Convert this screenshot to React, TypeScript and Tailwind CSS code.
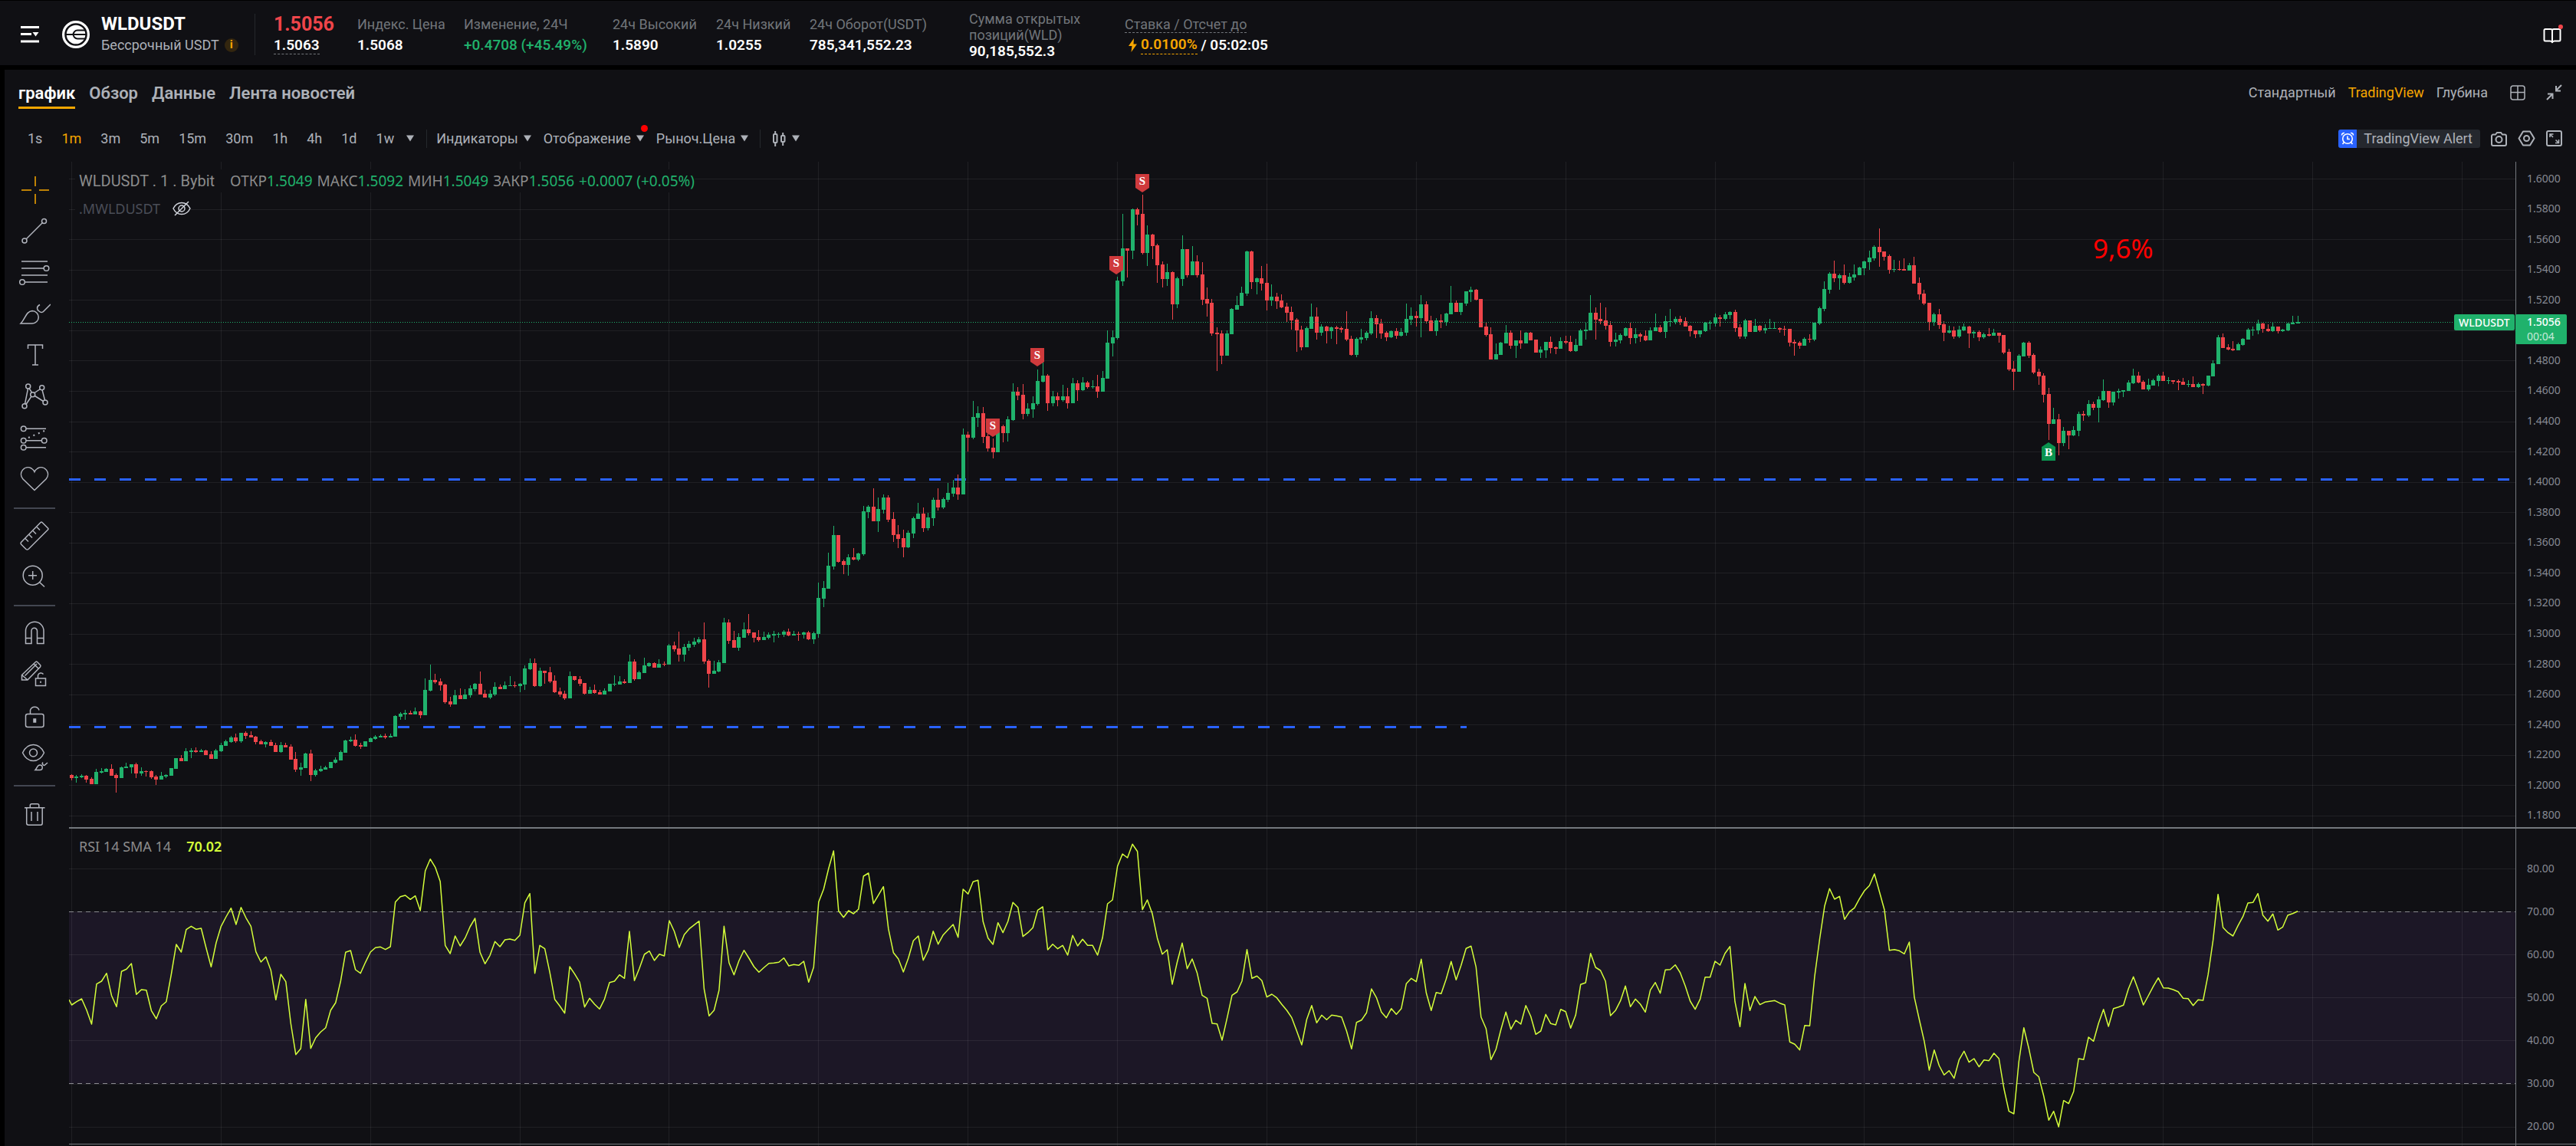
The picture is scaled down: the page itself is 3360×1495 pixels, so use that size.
import React, { useState } from "react";

type Segment = { base: number; tick: number; rows: number[][] };

// every row is [high, open, close, low] in ticks below the base price
const segments: Segment[] = [
  {
    base: 1.32378,
    tick: 0.00016848,
    rows: [
      [690,693,705,714],[693,705,699,723],[691,702,696,705],[693,696,711,723],[703,708,729,729],[669,729,681,729],
      [667,684,678,687],[666,681,669,681],[651,669,696,696],[687,693,705,762],[660,705,663,705],[645,666,660,666],
      [651,663,651,687],[645,651,687,705],[663,687,678,696],[675,678,681,699],[675,678,702,708],[694,699,711,732],
      [681,711,696,711],[690,699,693,705],[666,696,666,696],[627,669,627,669],[615,627,639,639],[588,639,600,639],
      [588,603,597,627],[585,597,603,606],[591,603,597,603],[594,597,615,617],[600,612,630,630],[591,630,597,630],
      [567,600,576,603],[555,579,561,579],[540,564,546,567],[531,546,561,567],[528,561,528,567],[522,528,540,552],
      [522,537,546,546],[540,543,564,573],[555,561,573,573],[561,573,564,585],[555,564,579,579],[567,576,603,603],
      [564,603,576,606],[567,576,585,585],[573,582,633,633],[603,630,672,681],[645,672,663,696],[606,666,609,666],
      [594,609,693,717],[669,693,675,699],[657,678,669,681],[657,672,663,672],[642,666,642,666],[624,645,633,648],
      [597,636,603,636],[555,606,558,606],[543,561,555,564],[534,555,579,582],[567,576,582,591],[561,582,561,582],
      [546,564,549,564],[537,552,543,555],[534,546,540,546],[531,540,546,552],[531,546,540,546],[459,543,462,543],
      [447,465,453,477],[438,456,450,477],[441,450,456,456],[429,456,444,456],[441,444,459,471],[315,459,360,459],
      [261,363,321,366],[297,321,330,336],[315,327,342,363],[336,339,408,414],[387,405,417,426],[360,417,381,417],
      [354,381,396,396],[357,396,378,396],[342,381,354,390],[333,357,336,366],[288,336,378,378],[360,375,390,390],
      [360,390,375,396],[330,378,348,384],[339,348,357,357],[327,357,342,357],[306,345,342,345],[327,342,345,351],
      [333,345,336,369],[264,339,276,360],[237,279,255,282],[237,255,345,348],[273,345,285,348],[285,285,294,336],
      [270,291,327,333],[303,324,369,372],[351,366,378,387],[363,375,393,399],[288,393,306,393],[306,306,321,324],
      [306,318,336,345],[333,333,375,378],[348,375,360,375],[339,360,372,375],[360,369,378,378],[354,378,363,378],
      [336,366,336,366],[303,339,336,345],[306,339,327,339],[318,327,333,336],[222,333,249,333],[240,249,318,324],
      [285,318,291,318],[234,294,264,294],[252,267,255,270],[252,255,273,273],[240,273,258,273],[249,258,261,267],
      [180,261,186,261],[171,186,201,210],[132,198,222,249],[180,222,192,249],[168,195,180,207],[156,183,171,192],
      [153,174,162,180],[96,162,249,258],[240,246,297,351],[246,297,285,297],[243,288,252,291],[78,255,96,255],
      [84,96,168,180],[129,165,195,195],[138,195,153,207],[96,156,123,156],[63,123,138,147],[135,135,156,174],
      [126,153,165,171],[132,165,153,165],[135,156,144,162],[129,147,141,174],[135,144,141,156],[126,144,132,153],
      [120,132,147,150],[129,147,141,147],[132,141,144,168],[132,144,135,159],[129,135,162,165],[132,162,138,180],
    ],
  },
  {
    base: 1.61188,
    tick: 0.00020631,
    rows: [
      [1347,1512,1396,1524],[1343,1399,1365,1426],[1252,1367,1294,1367],[1166,1296,1196,1306],[1196,1196,1281,1284],
      [1274,1279,1291,1321],[1257,1291,1267,1325],[1237,1267,1274,1276],[1252,1274,1254,1279],[1102,1257,1120,1262],
      [1100,1122,1105,1142],[1046,1105,1151,1151],[1076,1151,1112,1186],[1066,1115,1076,1127],[1068,1076,1147,1154],
      [1122,1144,1196,1218],[1164,1193,1208,1237],[1178,1205,1235,1267],[1181,1235,1188,1237],[1137,1191,1142,1205],
      [1093,1144,1127,1144],[1107,1127,1174,1186],[1125,1174,1139,1181],[1076,1142,1083,1166],[1046,1083,1107,1117],
      [1076,1107,1080,1112],[1029,1083,1061,1090],[1019,1063,1044,1073],[1002,1044,1066,1083],[855,1066,875,1066],
      [865,875,884,929],[767,884,818,889],[784,821,806,850],[786,806,882,902],[865,880,919,929],[887,916,931,951],
      [860,931,865,931],[843,848,870,899],[816,870,826,897],[710,828,737,831],[723,737,750,764],[713,747,808,826],
      [774,808,791,816],[752,794,774,821],[666,777,703,782],[645,706,686,708],[681,686,774,799],[735,774,752,784],
      [740,752,764,784],[715,764,752,769],[725,752,774,791],[693,774,710,774],[701,710,733,767],[691,733,708,735],
      [703,708,723,728],[701,723,720,728],[684,720,737,757],[671,737,693,737],[541,696,581,696],[541,583,563,625],
      [370,566,382,571],[169,385,279,399],[279,279,287,372],[152,287,154,314],[149,154,171,206],[108,169,294,299],
      [206,294,235,336],[233,235,272,314],[265,269,333,390],[321,331,377,404],[328,377,355,399],[353,355,458,507],
      [370,458,375,470],[238,377,282,399],[282,282,365,372],[272,365,321,365],[301,321,365,372],[323,363,443,461],
      [404,441,456,497],[441,453,551,559],[532,549,554,671],[541,551,622,649],[541,622,551,622],[470,554,473,554],
      [431,475,461,475],[402,463,421,463],[287,424,289,431],[287,289,387,409],[372,387,375,426],[336,375,392,414],
      [328,390,446,478],[394,446,434,463],[421,434,448,473],[426,446,468,470],[453,465,485,514],[465,483,510,539],
      [502,507,541,610],[527,539,595,605],[529,595,534,595],[456,537,497,537],[468,497,549,571],[522,549,529,559],
      [527,529,544,583],[529,544,532,568],[527,532,537,586],[529,534,539,549],[480,537,571,576],[559,568,620,622],
      [563,620,568,627],[537,571,563,583],[544,566,549,573],[480,551,502,556],[492,502,522,566],[505,519,551,568],
      [544,549,563,576],[541,563,544,566],[534,544,559,568],[534,559,546,561],[456,549,505,559],[468,507,495,524],
      [480,495,502,529],[429,502,458,563],[448,458,512,519],[495,510,544,544],[502,544,510,559],[490,510,514,534],
      [485,514,488,527],[399,490,453,490],[446,453,483,483],[453,483,453,492],[416,456,416,463],[402,419,412,451],
      [409,412,443,446],[441,441,532,532],[517,529,556,561],[532,554,635,635],[583,635,617,635],[578,620,581,620],
      [524,583,549,583],[541,549,590,600],[573,590,573,630],[541,573,583,600],[546,583,549,583],[546,549,573,573],
    ],
  },
  {
    base: 1.5765,
    tick: 0.00016848,
    rows: [
      [489,489,540,540],[516,540,528,561],[498,531,498,561],[477,498,522,543],[516,519,525,546],[480,525,495,525],
      [474,495,501,507],[474,498,534,537],[486,534,510,537],[447,513,453,513],[423,456,450,489],[315,453,384,453],
      [363,384,411,489],[345,408,417,429],[363,414,435,450],[417,432,498,516],[462,498,489,516],[465,492,471,504],
      [441,474,444,477],[423,444,483,507],[444,483,468,504],[462,468,477,498],[453,474,492,495],[441,492,453,492],
      [387,456,441,456],[432,441,459,462],[396,459,417,483],[369,420,417,438],[399,420,408,429],[396,408,420,432],
      [402,417,438,438],[432,435,456,477],[453,453,468,483],[453,468,453,480],[420,456,423,459],[414,426,423,450],
      [387,426,402,438],[393,402,408,438],[381,408,390,414],[378,393,381,408],[372,381,444,459],[429,441,477,486],
      [408,477,414,486],[414,414,459,459],[408,459,435,459],[432,435,453,459],[429,453,444,465],[408,447,444,447],
      [420,447,444,447],[441,444,450,462],[435,447,450,474],[447,447,501,516],[489,498,504,552],[495,501,513,525],
      [480,513,486,513],[468,486,489,501],[423,489,423,495],[360,426,366,432],[261,369,291,378],[225,294,231,309],
      [180,231,249,264],[231,249,237,294],[195,237,267,273],[228,267,243,270],[195,246,234,258],[204,237,207,237],
      [180,210,183,237],[141,186,168,216],[120,171,126,180],[54,126,147,204],[144,144,165,180],[156,162,216,231],
      [177,216,213,225],[180,213,216,219],[171,213,219,219],[189,219,198,219],[165,198,270,270],[246,267,312,333],
      [294,309,348,354],[345,345,420,453],[384,420,390,435],[369,390,432,447],[417,429,462,495],[435,462,453,465],
      [438,453,477,486],[435,477,450,483],[426,453,438,456],[435,438,465,522],[453,465,459,483],[453,459,480,495],
      [462,480,468,486],[444,468,474,477],[447,474,462,474],[462,462,474,501],[471,471,540,546],[525,537,606,612],
      [573,603,615,687],[546,615,552,615],[498,555,501,555],[495,501,552,561],[543,549,618,624],[603,615,633,666],
      [621,630,705,735],[678,702,819,882],[756,819,801,819],[780,801,894,942],[831,894,846,906],[846,846,864,918],
      [828,864,843,867],[771,846,780,867],[768,780,786,807],[726,786,741,792],[732,741,756,765],[711,756,723,813],
      [645,726,690,729],[690,690,735,756],[693,735,693,747],[681,696,690,720],[687,693,687,714],[648,690,657,690],
      [603,660,630,663],[615,630,657,660],[648,654,684,684],[642,684,666,690],[642,669,648,669],[624,651,630,672],
      [615,630,651,651],[636,651,648,663],[648,648,654,663],[645,651,657,687],[639,654,666,666],[648,666,663,675],
      [633,663,675,675],[657,675,663,678],[660,663,669,702],[630,669,630,672],[570,633,582,633],[471,585,480,585],
      [465,480,522,522],[507,519,528,531],[495,525,531,534],[501,531,507,531],[483,510,486,513],[444,489,450,489],
      [438,453,450,474],[411,453,426,468],[423,426,447,462],[429,447,456,459],[423,456,438,459],[438,438,456,465],
      [447,456,450,459],[423,453,426,456],[396,429,423,429],[396,426,420,426],
    ],
  },
];

// RSI per candle, in thirds of a pixel from the top of the pane
const rsi = [
  723,710,699,743,798,641,630,599,686,730,592,583,561,682,663,665,745,777,727,710,603,486,516,428,415,427,423,500,574,480,
  415,378,344,408,341,382,415,515,555,535,587,703,603,632,795,917,894,701,893,851,829,812,744,714,630,517,510,585,599,556,
  516,499,496,506,495,320,299,294,310,296,354,198,152,184,240,490,522,453,492,461,417,384,517,562,529,475,495,468,465,470,
  450,323,287,599,490,503,595,701,727,755,573,602,634,731,697,720,739,700,635,630,605,619,435,628,580,525,512,549,524,531,
  393,435,498,448,425,410,395,660,766,744,665,415,558,605,550,509,540,573,595,577,560,559,556,539,570,565,568,552,634,575,
  320,270,189,120,355,380,354,366,348,219,207,326,293,260,425,518,543,594,540,472,453,548,509,434,485,449,428,408,458,270,
  289,241,235,396,461,486,401,440,396,322,341,455,440,421,352,339,507,485,503,490,528,451,492,466,490,490,528,460,327,312,
  180,132,147,94,122,350,312,366,461,524,507,642,555,481,581,543,598,685,697,795,797,861,775,685,672,629,506,619,610,628,
  692,681,695,721,744,773,825,879,780,725,793,763,781,763,766,770,825,895,791,782,754,660,694,751,773,737,760,737,640,619,
  632,544,675,745,674,679,622,553,625,568,502,493,575,770,815,937,897,820,751,818,783,798,725,768,838,825,760,796,801,740,
  749,814,763,643,636,521,576,588,630,765,745,707,649,730,700,720,751,665,635,677,586,584,566,597,648,708,740,700,614,614,
  552,567,521,494,710,808,639,745,690,722,712,709,706,716,723,868,877,899,803,805,610,465,335,268,309,298,388,358,343,307,
  276,256,210,280,350,509,506,511,523,477,692,780,865,978,899,960,997,980,1010,938,904,947,933,965,938,941,912,933,1050,1139,
  1149,945,812,893,987,1004,1080,1174,1139,1200,1097,1109,1062,933,937,849,865,795,740,807,737,731,724,660,613,665,723,687,650,617,
  656,657,663,671,697,698,725,703,705,605,470,290,420,440,453,413,377,324,322,287,372,395,367,430,418,372,365,356,
];

const GREEN = "#20b26c";
const RED = "#ef454a";
const STEP = 6.4956;

const xAt = (i: number) => 3.5 + i * STEP;
const priceY = (p: number) => 22.5 + ((1.6 - p) / 0.02) * 39.57;
const rsiY = (v: number) => 922.5 + (80 - v) * 5.61;

const candles = segments.flatMap((s) =>
  s.rows.map((r) => r.map((t) => s.base - t * s.tick))
);

const priceLabels = Array.from({ length: 22 }, (_, i) => 1.6 - i * 0.02);
const rsiLabels = [80, 70, 60, 50, 40, 30, 20];

const stats = [
  { label: "Индекс. Цена", value: "1.5068", width: "w-[115px]" },
  { label: "Изменение, 24Ч", value: "+0.4708 (+45.49%)", width: "w-[170px]", up: true },
  { label: "24ч Высокий", value: "1.5890", width: "w-[111px]" },
  { label: "24ч Низкий", value: "1.0255", width: "w-[98px]" },
  { label: "24ч Оборот(USDT)", value: "785,341,552.23", width: "w-[184px]" },
];

const Caret = () => (
  <svg width="10" height="9" viewBox="0 0 10 9" className="shrink-0">
    <path d="M0 0.5h10L5 8.5z" fill="currentColor" />
  </svg>
);

function Header() {
  return (
    <header className="flex h-[84px] items-center whitespace-nowrap bg-[#101014] pl-[27px] pr-[17px] pt-1 text-[18px] leading-[27px]">
      <button aria-label="Меню" className="shrink-0 text-white">
        <svg width="24" height="24" viewBox="0 0 24 24" fill="none" stroke="currentColor" strokeWidth="3">
          <path d="M0 2.5h24M0 11.5h14M0 21h24" />
          <path d="M15.5 9h8l-4 5.5z" fill="currentColor" stroke="none" />
        </svg>
      </button>
      <svg width="36" height="36" viewBox="0 0 36 36" className="ml-[30px] shrink-0" fill="none">
        <circle cx="18" cy="18" r="16.4" stroke="#fff" strokeWidth="3.2" />
        <circle cx="18" cy="18" r="12.3" fill="#fff" />
        <path d="M31 12.6H20a5.4 5.4 0 0 0 0 10.8h11" stroke="#101014" strokeWidth="2" />
        <path d="M5 18h26" stroke="#101014" strokeWidth="2" />
      </svg>
      <div className="ml-[15px] w-[201px] shrink-0 border-r border-[#25282c]">
        <div className="text-[24px] font-bold text-white">WLDUSDT</div>
        <div className="flex items-center gap-[7px] text-[#adb1b8]">
          Бессрочный USDT
          <span className="flex size-[18px] items-center justify-center rounded-full bg-[#33260f] text-[15px] font-bold text-[#f7a600]">
            i
          </span>
        </div>
      </div>
      <div className="ml-6 w-[85px] shrink-0">
        <div className="text-[25px] font-bold text-[#ef454a]">1.5056</div>
        <div className="text-[19px] font-semibold text-white">
          <span className="border-b border-dashed border-[#71757a]">1.5063</span>
        </div>
      </div>
      <dl className="ml-6 flex items-center gap-6">
        {stats.map((s) => (
          <div key={s.label} className={`${s.width} shrink-0`}>
            <dt className="text-[#71757a]">{s.label}</dt>
            <dd className={s.up ? "text-[19px] font-medium text-[#20b26c]" : "text-[19px] font-semibold text-white"}>
              {s.value}
            </dd>
          </div>
        ))}
        <div className="w-[179px] shrink-0 leading-[21px]">
          <dt className="text-[#71757a]">
            Сумма открытых
            <br />
            позиций(WLD)
          </dt>
          <dd className="text-[19px] font-semibold text-white">90,185,552.3</dd>
        </div>
        <div className="shrink-0">
          <dt className="text-[#71757a]">
            <span className="border-b border-dashed border-[#71757a]">Ставка / Отсчет до</span>
          </dt>
          <dd className="flex items-center pl-[5px] text-[19px] font-semibold text-white">
            <svg width="11" height="18" viewBox="0 0 11 18" className="mr-[5px]">
              <path d="M7 0L0 10h4.5L3.5 18 11 7.5H6.5z" fill="#f7a600" />
            </svg>
            <span className="border-b border-dashed border-[#f7a600] leading-6 text-[#f7a600]">0.0100%</span>
            &nbsp;/ 05:02:05
          </dd>
        </div>
      </dl>
      <button aria-label="Обучение" className="ml-auto text-white">
        <svg width="26" height="28" viewBox="0 0 26 28" fill="none" stroke="currentColor" strokeWidth="2">
          <path d="M12 8.500V25M12 24c-1-1-2-1.500-3-1.500H3A1.500 1.500 0 0 1 1.500 21V8.500A1.500 1.500 0 0 1 3 7h7a2 2 0 0 1 2 2 2 2 0 0 1 2-2h7a1.500 1.500 0 0 1 1.500 1.500V21a1.500 1.500 0 0 1-1.500 1.500h-6c-1 0-2 .5-3 1.500z" />
          <circle cx="23" cy="4" r="3" fill="#ef454a" stroke="none" />
        </svg>
      </button>
    </header>
  );
}

function Tabs() {
  const [tab, setTab] = useState("график");
  return (
    <div className="flex h-[59px] items-center justify-between px-[18px]">
      <nav className="flex gap-[18px] text-[22px] font-semibold">
        {["график", "Обзор", "Данные", "Лента новостей"].map((t) => (
          <button
            key={t}
            onClick={() => setTab(t)}
            className={
              t === tab
                ? "h-[43px] border-b-[3px] border-[#f7a600] pt-1 text-white"
                : "h-[43px] border-b-[3px] border-transparent pt-1 text-[#adb1b8]"
            }
          >
            {t}
          </button>
        ))}
      </nav>
      <div className="flex items-center gap-4 text-[18px] text-[#adb1b8]">
        <button>Стандартный</button>
        <button className="text-[#f7a600]">TradingView</button>
        <button>Глубина</button>
        <button aria-label="Сетка" className="ml-[13px]">
          <svg width="20" height="20" viewBox="0 0 20 20" fill="none" stroke="currentColor" strokeWidth="1.5">
            <rect x="1" y="1" width="18" height="18" rx="3" />
            <path d="M10 1v18M1 9.5h18" />
          </svg>
        </button>
        <button aria-label="Свернуть" className="ml-[11px]">
          <svg width="21" height="21" viewBox="0 0 21 21" fill="none" stroke="currentColor" strokeWidth="2">
            <path d="M20 1l-7 7M13 2v6.5h6M1 20l7-7M8.5 19v-6.500H2" />
          </svg>
        </button>
      </div>
    </div>
  );
}

function Toolbar() {
  const [period, setPeriod] = useState("1m");
  return (
    <div className="flex h-[61px] items-center justify-between whitespace-nowrap pl-[30px] pr-[18px] text-[18px] text-[#adb1b8]">
      <div className="flex items-center">
        <div className="flex items-center gap-[25px]">
          {["1s", "1m", "3m", "5m", "15m", "30m", "1h", "4h", "1d", "1w"].map((p) => (
            <button
              key={p}
              onClick={() => setPeriod(p)}
              className={p === period ? "text-[#f7a600]" : ""}
            >
              {p}
            </button>
          ))}
        </div>
        <button aria-label="Другие интервалы" className="ml-4">
          <Caret />
        </button>
        <span className="ml-4 mr-3 h-6 w-px bg-[#25282c]" />
        <button className="flex items-center gap-[7px]">
          Индикаторы <Caret />
        </button>
        <button className="relative ml-4 flex items-center gap-[7px]">
          Отображение <Caret />
          <span className="absolute -top-1 right-[-5px] size-[9px] rounded-full bg-[#f00]" />
        </button>
        <button className="ml-4 flex items-center gap-[7px]">
          Рыноч.Цена <Caret />
        </button>
        <span className="mx-[15px] h-6 w-px bg-[#25282c]" />
        <button aria-label="Тип графика" className="flex items-center gap-[7px]">
          <svg width="19" height="20" viewBox="0 0 19 20" fill="none" stroke="currentColor" strokeWidth="2">
            <rect x="2" y="4" width="4.5" height="11" rx="1" />
            <rect x="12" y="6" width="4.5" height="8" rx="1" />
            <path d="M4.2 0v4M4.2 15v5M14.2 2v4M14.2 14v5" />
          </svg>
          <Caret />
        </button>
      </div>
      <div className="flex items-center gap-[14px]">
        <button className="flex h-6 items-center overflow-hidden rounded-[3px] bg-[#25282e] pr-2.5">
          <span className="mr-[9px] flex size-6 items-center justify-center bg-[#2962ff] text-white">
            <svg width="18" height="18" viewBox="0 0 18 18" fill="none" stroke="currentColor" strokeWidth="1.6">
              <circle cx="9" cy="9" r="6.3" />
              <path d="M9 5.5V9.500h3M1.500 4.500A3 3 0 0 1 5 1.500M16.500 4.500A3 3 0 0 0 13 1.500M4.500 13.500L2.500 16M13.500 13.500l2 2.500" />
            </svg>
          </span>
          TradingView Alert
        </button>
        <button aria-label="Снимок">
          <svg width="21" height="20" viewBox="0 0 21 20" fill="none" stroke="currentColor" strokeWidth="2">
            <path d="M3 4.5h3L8 2h5l2 2.500h3a2 2 0 0 1 2 2V17a2 2 0 0 1-2 2H3a2 2 0 0 1-2-2V6.500a2 2 0 0 1 2-2z" />
            <circle cx="10.5" cy="11" r="4" />
          </svg>
        </button>
        <button aria-label="Настройки">
          <svg width="23" height="21" viewBox="0 0 23 21" fill="none" stroke="currentColor" strokeWidth="2">
            <path d="M7 1.5h9l5.500 9-5.500 9H7l-5.500-9z" strokeLinejoin="round" />
            <circle cx="11.5" cy="10.5" r="3.5" />
          </svg>
        </button>
        <button aria-label="На весь экран">
          <svg width="21" height="21" viewBox="0 0 21 21" fill="none" stroke="currentColor" strokeWidth="2">
            <rect x="1" y="1" width="19" height="19" rx="2" />
            <path d="M5 9V5h4.500M5 5l4 4M16.500 12v4.500H12M16.500 16.500l-4-4" strokeWidth="1.6" />
          </svg>
        </button>
      </div>
    </div>
  );
}

const tools: { name: string; icon: React.ReactNode }[][] = [
  [
    { name: "Перекрестие", icon: <path d="M22 3v13M22 26v13M4 21h13M27 21h13" stroke="#f7a600" /> },
    {
      name: "Линия тренда",
      icon: (
        <>
          <circle cx="33.5" cy="7.5" r="3" />
          <circle cx="8" cy="33" r="3" />
          <path d="M31.5 9.5L10 31" />
        </>
      ),
    },
    {
      name: "Фибоначчи",
      icon: (
        <>
          <path d="M4 6h34M4 15h29M4 24h34M9 33h29" />
          <circle cx="36.5" cy="15" r="3.3" />
          <circle cx="5" cy="33" r="3.3" />
        </>
      ),
    },
    {
      name: "Кисть",
      icon: (
        <path d="M3 33C9 27 10 17 18 16.5A8.2 8.2 0 0 1 18 33zM28 8.5C23 11 24 15 27 17c3 2.5 5 1.5 7-1l8-8" />
      ),
    },
    { name: "Текст", icon: <path d="M12.5 12V7h19v5M22 7v26M18 33h8" /> },
    {
      name: "Паттерны",
      icon: (
        <>
          <circle cx="12.7" cy="7" r="3" />
          <circle cx="30.7" cy="8.7" r="3" />
          <circle cx="18.7" cy="17.7" r="3" />
          <circle cx="8" cy="32.7" r="3" />
          <circle cx="35" cy="28" r="3" />
          <path d="M12.5 10L8.5 30M14 9.5l3.5 5.5M10 30.5l7-10.5M21 15.5l7.5-5M21.5 19.5l11 7M31 11.5l3.5 13.5" />
        </>
      ),
    },
    {
      name: "Прогноз",
      icon: (
        <>
          <circle cx="6.7" cy="8.3" r="3.3" />
          <circle cx="6.7" cy="23.7" r="3.3" />
          <circle cx="6.7" cy="32.7" r="3.3" />
          <circle cx="33.7" cy="23.7" r="3.3" />
          <path d="M10 8.3h26M10 23.7h20.5M10 32.7h26" />
          <path d="M13 20l21-9" strokeDasharray="2 5" strokeWidth="2" />
        </>
      ),
    },
    {
      name: "Избранное",
      icon: <path d="M21 34.5L6 20C-1 12 8 1 17 6q3 2 4 4.5Q22 8 25 6c9-5 18 6 11 14z" />,
    },
  ],
  [
    {
      name: "Линейка",
      icon: (
        <>
          <path d="M31 3.5l7.5 7.5q1 1 0 2L13 38.5q-1.500 1-3 0L3.500 32q-1-1 0-2.500L29 3.500q1-1 2 0z" />
          <path d="M9 24.5l4 4M14 19.5l4 4M19 14.5l4 4M24 9.5l4 4" />
        </>
      ),
    },
    {
      name: "Увеличить",
      icon: (
        <>
          <circle cx="18.7" cy="18.7" r="12.5" />
          <path d="M27.5 27.5l6.5 6M18.7 13v11M13 18.700h11" />
        </>
      ),
    },
  ],
  [
    {
      name: "Магнит",
      icon: (
        <path d="M9.5 34.5V18a11.7 11.7 0 0 1 23.5 0v16.5h-8.500V18a3.500 3.500 0 0 0-7.500 0v16.500zM9.500 27.500H17M24.500 27.500H33" />
      ),
    },
    {
      name: "Режим рисования",
      icon: (
        <>
          <path d="M22.5 4.5q1-1 2 0l4 4q1 1 0 2.5L12 28H4.500v-6.500zM4.500 21.500l7.500 6.500M8.500 22.500L24 7M20 7l6.500 6.500" />
          <path d="M22.5 26h13v9.500h-13zM25.500 26v-4a4 4 0 0 1 7-1.500M29 29.500v2.500" />
        </>
      ),
    },
    {
      name: "Заблокировать",
      icon: (
        <>
          <rect x="9.5" y="18.5" width="23.5" height="17" rx="2.5" />
          <path d="M15.5 18.5v-5a6 6 0 0 1 11.500 0" />
          <rect x="20" y="25" width="2.5" height="4" fill="currentColor" />
        </>
      ),
    },
    {
      name: "Скрыть",
      icon: (
        <>
          <path d="M5.5 15C12 1 27 1 33.5 15 27 29 12 29 5.5 15z" />
          <circle cx="19.5" cy="15" r="5" />
          <path d="M22 37.5c2-2 2.500-6.500 6-6.500a3.200 3.200 0 0 1 0 6.500zM32 27.500c-2 2 1 5 2.500 3.500l3.500-3" />
        </>
      ),
    },
  ],
  [
    {
      name: "Удалить",
      icon: (
        <path d="M8 13.7h26.5M10.7 13.7v20q0 2.5 2.5 2.5h16q2 0 2-2.500v-20M15.300 13.700v-3q0-2 2-2h7.500q2 0 2 2v3M17 19v12M25 19v12" />
      ),
    },
  ],
];

function Sidebar() {
  return (
    <aside className="flex w-[84px] shrink-0 flex-col pl-3 pt-2.5 text-[#b2b5be]">
      {tools.map((group, g) => (
        <React.Fragment key={g}>
          {g > 0 && (
            <div className="flex h-[19px] w-[54px] items-center">
              <hr className="h-0.5 w-full border-0 bg-[#434651]" />
            </div>
          )}
          {group.map((t) => (
            <button key={t.name} aria-label={t.name} className="flex size-[54px] items-center justify-center">
              <svg width="42" height="42" viewBox="0 0 42 42" fill="none" stroke="currentColor" strokeWidth="1.5">
                {t.icon}
              </svg>
            </button>
          ))}
        </React.Fragment>
      ))}
    </aside>
  );
}

function Marker({ x, y, side }: { x: number; y: number; side: "S" | "B" }) {
  const sell = side === "S";
  return (
    <g transform={`translate(${x} ${y})`}>
      <path d={sell ? "M-9 0H9V18L0 24L-9 18z" : "M-9 24H9V6L0 0L-9 6z"} fill={sell ? "#cf3a3c" : "#0a9450"} />
      <text
        y={sell ? 14 : 18}
        textAnchor="middle"
        className="fill-white font-['Liberation_Serif',serif] text-[15px] font-bold"
      >
        {side}
      </text>
    </g>
  );
}

function Chart() {
  return (
    <svg viewBox="0 0 3270 1284" className="block h-auto w-full font-['Noto_Sans',sans-serif]">
      <rect y="978.5" x="0" width="3191" height="224" fill="#1c1726" />

      <g stroke="#fff" strokeOpacity="0.07" shapeRendering="crispEdges">
        {Array.from({ length: 17 }, (_, i) => (
          <line key={i} x1={xAt(i * 30)} x2={xAt(i * 30)} y1="0" y2="1284" />
        ))}
        {priceLabels.map((p) => (
          <line key={p} x1="0" x2="3191" y1={priceY(p)} y2={priceY(p)} />
        ))}
        {rsiLabels.map((v) => (
          <line key={v} x1="0" x2="3191" y1={rsiY(v)} y2={rsiY(v)} />
        ))}
      </g>

      {/* user drawn levels */}
      <g stroke="#2962ff" strokeWidth="3" strokeDasharray="15 18">
        <path d="M0 414.5H3191" />
        <path d="M0 737.5H1823" />
      </g>

      <g shapeRendering="crispEdges">
        {candles.map(([h, o, c, l], i) => {
          const color = c >= o ? GREEN : RED;
          const x = Math.floor(xAt(i));
          const top = Math.round(priceY(Math.max(o, c)) - 0.2);
          const bottom = Math.round(priceY(Math.min(o, c)) - 0.2);
          const high = Math.round(priceY(h) - 0.2);
          const low = Math.round(priceY(l) - 0.2);
          return (
            <g key={i} fill={color}>
              <rect x={x} y={high} width="1" height={Math.max(low - high, 1)} />
              <rect x={x - 2} y={top} width="5" height={Math.max(bottom - top, 1)} />
            </g>
          );
        })}
      </g>

      <path d="M0 209.5H3111" stroke={GREEN} strokeDasharray="1 2" shapeRendering="crispEdges" />

      <Marker x={1400} y={16} side="S" />
      <Marker x={1366} y={123} side="S" />
      <Marker x={1263} y={243} side="S" />
      <Marker x={1205} y={335} side="S" />
      <Marker x={2582} y={366} side="B" />

      <text x="2640" y="126" className="fill-[#f00] text-[35px]">
        9,6%
      </text>

      <path d="M0 978.5H3191M0 1202.5H3191" stroke="#8a8a90" strokeDasharray="6 5" shapeRendering="crispEdges" />
      <polyline
        points={["0,1093", ...rsi.map((v, i) => `${xAt(i).toFixed(1)},${(859 + v / 3).toFixed(1)}`)].join(" ")}
        fill="none"
        stroke="#d4ff3a"
        strokeWidth="1.5"
        strokeLinejoin="round"
      />

      {/* pane borders */}
      <g stroke="#74787d" shapeRendering="crispEdges">
        <path d="M3191.5 0V1284M0 1281.5H3270" />
        <path d="M0 869H3270" strokeWidth="2" />
      </g>

      <g className="fill-[#868993] text-[14px]">
        {/* 1.5000 is hidden by the last price tag */}
        {priceLabels
          .filter((p) => p.toFixed(4) !== "1.5000")
          .map((p) => (
            <text key={p} x="3206" y={priceY(p) + 4}>
              {p.toFixed(4)}
            </text>
          ))}
        {rsiLabels.map((v) => (
          <text key={v} x="3206" y={rsiY(v) + 4}>
            {v.toFixed(2)}
          </text>
        ))}
      </g>

      {/* last price */}
      <rect x="3111" y="199" width="79" height="21" rx="2" fill={GREEN} />
      <text x="3117" y="215" className="fill-white text-[14px] font-medium">
        WLDUSDT
      </text>
      <rect x="3191" y="199" width="67" height="39" rx="2" fill={GREEN} />
      <text x="3206" y="214" className="fill-white text-[14px] font-medium">
        1.5056
      </text>
      <text x="3206" y="233" className="fill-[#c5ead8] text-[14px]">
        00:04
      </text>
    </svg>
  );
}

const ohlc = [
  ["ОТКР", "1.5049"],
  ["МАКС", "1.5092"],
  ["МИН", "1.5049"],
  ["ЗАКР", "1.5056"],
];

export default function App() {
  return (
    <div className="bg-black pt-px font-[Roboto,'Noto_Sans',sans-serif]">
      <Header />
      <main className="ml-1.5 mt-1.5 bg-[#101014]">
        <Tabs />
        <Toolbar />
        <div className="flex">
          <Sidebar />
          <section className="relative min-w-0 flex-1">
            <Chart />
            <div className="absolute left-2 top-2.5 whitespace-nowrap font-['Noto_Sans',sans-serif] text-[18px] leading-[30px] text-[#8c8c8c]">
              <div className="flex items-center gap-5 bg-[#101014] pl-[5px] text-[19px]">
                <span className="font-[Roboto,sans-serif] text-[20px]">WLDUSDT . 1 . Bybit</span>
                <span className="flex gap-1.5 text-[#20b26c]">
                  {ohlc.map(([k, v]) => (
                    <span key={k}>
                      <span className="text-[#8c8c8c]">{k}</span>
                      {v}
                    </span>
                  ))}
                  <span>+0.0007 (+0.05%)</span>
                </span>
              </div>
              <div className="mt-1.5 flex w-fit items-center gap-4 bg-[#101014] pl-[5px] text-[#4a4d57]">
                .MWLDUSDT
                <button aria-label="Показать" className="text-[#d1d4dc]">
                  <svg width="24" height="20" viewBox="0 0 24 20" fill="none" stroke="currentColor" strokeWidth="1.5">
                    <path d="M1 10C6 0 18 0 23 10 18 20 6 20 1 10zM3 19L21 1" />
                    <circle cx="12" cy="10" r="4" />
                  </svg>
                </button>
              </div>
            </div>
            <div className="absolute left-[13px] top-[878px] flex gap-5 whitespace-nowrap font-['Noto_Sans',sans-serif] text-[18px] leading-[30px] text-[#8c8c8c]">
              RSI 14 SMA 14 <span className="font-semibold text-[#d4ff3a]">70.02</span>
            </div>
          </section>
        </div>
      </main>
    </div>
  );
}
